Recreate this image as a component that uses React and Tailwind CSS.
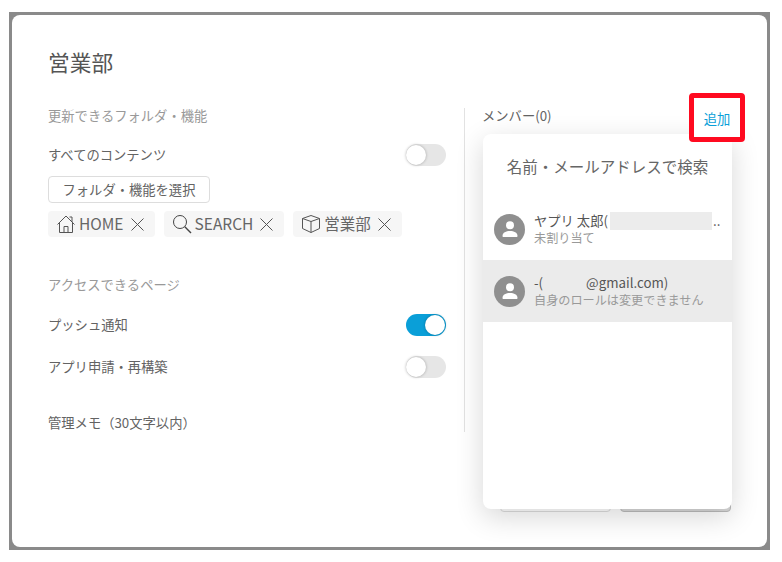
const font = { fontFamily: '"Noto Sans CJK JP", "Noto Sans", sans-serif' };

function Toggle({ on }) {
  return (
    <div
      className={
        "w-10 h-[22px] rounded-full flex items-center " +
        (on ? "bg-[#0a9fd8] justify-end pr-px" : "bg-[#e6e6e6] justify-start")
      }
    >
      <div className="w-5 h-5 rounded-full bg-white shadow-[0_0_3px_rgba(0,0,0,0.3)]" />
    </div>
  );
}

function HomeIcon() {
  return (
    <svg width="20" height="20" viewBox="0 0 20 20" fill="none" stroke="#555" strokeWidth="1">
      <path d="M1.500 10.500 10 2l8.500 8.500" />
      <path d="M3.500 9v9.500h13V9" />
      <path d="M8 18.500V12.500h4v6" />
      <path d="M13.500 3h2.500v5" />
    </svg>
  );
}

function SearchIcon() {
  return (
    <svg width="20" height="20" viewBox="0 0 20 20" fill="none" stroke="#444">
      <circle cx="8" cy="8" r="6.500" strokeWidth="1" />
      <path d="M12.800 12.800 19 19" strokeWidth="1.400" />
    </svg>
  );
}

function BoxIcon() {
  return (
    <svg width="20" height="20" viewBox="0 0 20 20" fill="none" stroke="#555" strokeWidth="1">
      <path d="M10 1.500 1.500 4.500v10L10 18.500l8.500-4v-10z" />
      <path d="M1.500 4.500 10 7.500l8.500-3" />
      <path d="M10 7.500v11" />
    </svg>
  );
}

function CloseIcon() {
  return (
    <svg width="13" height="13" viewBox="0 0 13 13" fill="none" stroke="#555" strokeWidth="1" className="ml-[4px] mr-[3px] shrink-0">
      <path d="M.5.500l12 12M12.500.500l-12 12" />
    </svg>
  );
}

function Chip({ icon, label }) {
  return (
    <div className="h-[26px] flex items-center gap-[3px] rounded bg-[#f6f6f6] px-2 text-[15.500px] text-[#666]">
      {icon}
      <span>{label}</span>
      <CloseIcon />
    </div>
  );
}

function Avatar() {
  return (
    <div className="w-[31px] h-[31px] shrink-0 rounded-full bg-[#8f8f8f] flex items-center justify-center">
      <svg width="20" height="20" viewBox="0 0 20 20" fill="white">
        <circle cx="10" cy="6.200" r="4" />
        <path d="M2.500 17c0-3.600 3.600-5 7.500-5s7.500 1.400 7.500 5c0 .6-.4 1-1 1h-13c-.6 0-1-.4-1-1z" />
      </svg>
    </div>
  );
}

export default function App() {
  return (
    <div className="w-[782px] h-[562px] bg-white pt-3 pl-[9px]" style={font}>
      <div className="w-[761px] h-[538px] bg-[#8a8a8a] p-[3px]">
        <div className="relative w-full h-full rounded-lg bg-white pl-[36px] pt-[29px] text-[#636363]">
          <h1 className="text-[21.700px] leading-[36px] text-[#555]">営業部</h1>

          <div className="flex mt-[25px]">
            <div className="w-[398px] h-[344px] flex flex-col text-[13.300px]">
              <p className="leading-[20px] text-[#999] mt-px">更新できるフォルダ・機能</p>
              <div className="flex items-center justify-between mt-[18px]">
                <span>すべてのコンテンツ</span>
                <Toggle />
              </div>
              <button className="self-start mt-[10px] h-[27px] px-[13.500px] rounded border border-[#ddd] text-[#636363]">
                フォルダ・機能を選択
              </button>
              <div className="flex gap-[9px] mt-[8px]">
                <Chip icon={<HomeIcon />} label="HOME" />
                <Chip icon={<SearchIcon />} label="SEARCH" />
                <Chip icon={<BoxIcon />} label="営業部" />
              </div>
              <p className="leading-[20px] text-[#999] mt-[38px]">アクセスできるページ</p>
              <div className="flex items-center justify-between mt-[19px]">
                <span>プッシュ通知</span>
                <Toggle on />
              </div>
              <div className="flex items-center justify-between mt-[20px]">
                <span>アプリ申請・再構築</span>
                <Toggle />
              </div>
              <p className="leading-[20px] mt-[35px]">管理メモ（30文字以内）</p>
            </div>

            <div className="w-px h-[324px] bg-[#e2e2e2] ml-[18px] mt-[3px]" />

            <div className="ml-[17px] w-[249px]">
              <div className="flex justify-between text-[13.300px] leading-[20px] mt-px">
                <span>メンバー(0)</span>
              </div>
            </div>
          </div>

          {/* ボタン（ポップアップの後ろに少しだけ見える） */}
          <div className="absolute left-[488px] top-[470px] w-[111px] h-[27px] rounded border border-[#ddd] bg-white" />
          <div className="absolute left-[608px] top-[470px] w-[111px] h-[27px] rounded border border-[#bbb] bg-[#d9d9d9]" />

          {/* メンバー検索ポップアップ */}
          <div className="absolute left-[471px] top-[119px] w-[249px] h-[375px] rounded-lg bg-white shadow-[0_8px_28px_rgba(0,0,0,0.16)]">
            <p className="text-center text-[15.500px] text-[#666] leading-[22px] mt-[21px]">名前・メールアドレスで検索</p>
            <div className="mt-[21px] h-[62px] flex items-center gap-[9px] pl-[11px]">
              <Avatar />
              <div className="min-w-0 flex-1">
                <div className="flex items-center whitespace-nowrap text-[13.300px] leading-[18px] text-[#555]">
                  <span>ヤプリ 太郎(</span>
                  <span className="ml-[2px] w-[102px] h-[18px] shrink-0 bg-[#ececec]" />
                  <span className="ml-px">..</span>
                </div>
                <p className="text-[12.150px] leading-[16px] text-[#999]">未割り当て</p>
              </div>
            </div>
            <div className="h-[62px] flex items-center gap-[9px] pl-[11px] bg-[#ebebeb]">
              <Avatar />
              <div className="min-w-0 flex-1">
                <div className="text-[13.300px] leading-[18px] text-[#555]">
                  -(<span className="inline-block w-[43px]" />@gmail.com)
                </div>
                <p className="text-[12.150px] leading-[16px] text-[#999]">自身のロールは変更できません</p>
              </div>
            </div>
          </div>

          {/* 追加を囲む赤枠 */}
          <div className="absolute left-[677px] top-[78px] w-[56px] h-[49px] rounded-sm border-[5px] border-[#ff0a20] bg-white flex items-center justify-center">
            <span className="text-[13.300px] text-[#0a9fd8] mt-0.5">追加</span>
          </div>
        </div>
      </div>
    </div>
  );
}
